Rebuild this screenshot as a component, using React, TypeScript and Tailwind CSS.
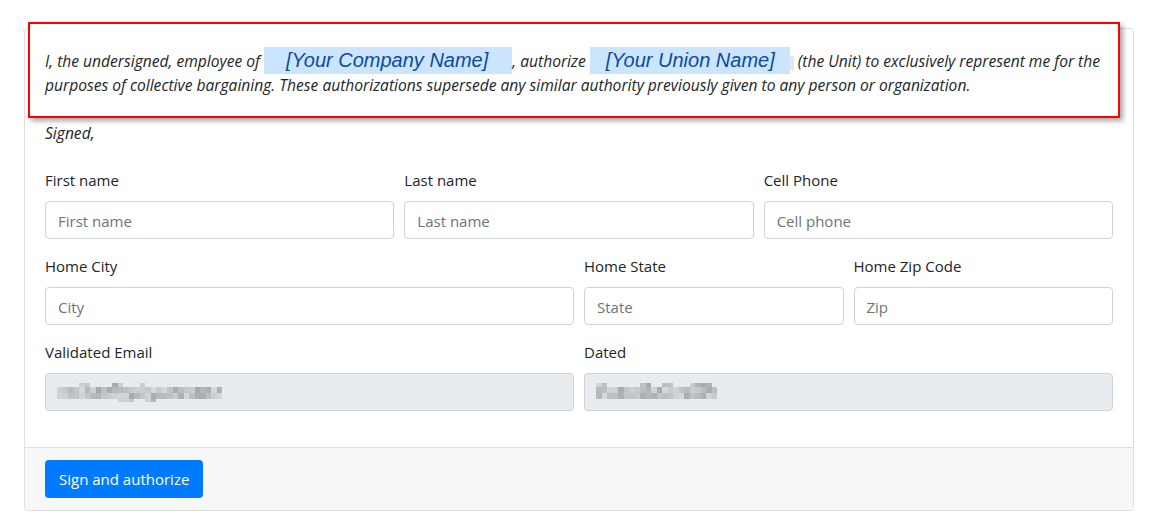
import React from "react";

const font = { fontFamily: '"Segoe UI", "Open Sans", sans-serif' };

function Field({ label, placeholder, className }: { label: string; placeholder: string; className: string }) {
  return (
    <div className={className}>
      <label className="block text-[15px] leading-[24px] text-[#212529] mb-[8px] -mt-[1px] pb-[1px]">{label}</label>
      <div className="h-[38px] rounded-[4px] border border-[#ced4da] bg-white px-[12px] pt-[2px] flex items-center text-[15px] text-[#6c757d]">
        {placeholder}
      </div>
    </div>
  );
}

// deterministic mosaic for a blurred (pixelated) value
function Mosaic({ cols, seed, asc, desc }: { cols: number; seed: number; asc: number[]; desc: number[] }) {
  const rnd = (i: number) => {
    const x = Math.sin(i * 12.9898 + seed * 78.233) * 43758.5453;
    return x - Math.floor(x);
  };
  const shade = (v: number) => {
    const g = Math.round(165 + v * 48);
    return `rgb(${g},${g + 3},${g + 7})`;
  };
  const rows = [
    { h: 4, on: (c: number) => asc.includes(c) },
    { h: 6, on: () => true },
    { h: 6, on: () => true },
    { h: 3, on: (c: number) => desc.includes(c) },
  ];
  return (
    <div className="flex flex-col">
      {rows.map((r, ri) => (
        <div key={ri} className="flex">
          {Array.from({ length: cols }).map((_, ci) => (
            <div
              key={ci}
              style={{
                width: 5.5,
                height: r.h,
                background: r.on(ci) ? shade(rnd(ci * 7 + ri * 31)) : "transparent",
              }}
            />
          ))}
        </div>
      ))}
    </div>
  );
}

function DisabledField({ label, children }: { label: string; children: React.ReactNode }) {
  return (
    <div className="col-span-2">
      <label className="block text-[15px] leading-[24px] text-[#212529] mb-[8px] -mt-[1px] pb-[1px]">{label}</label>
      <div className="h-[38px] rounded-[4px] border border-[#ced4da] bg-[#e9ecef] pl-[11px] flex items-center">
        {children}
      </div>
    </div>
  );
}

export default function App() {
  return (
    <div className="w-[1154px] h-[529px] bg-white" style={font}>
      <div className="pt-[28px] pl-[24px] pr-[20px]">
        <div className="border border-[#dfdfdf] rounded-[4px] bg-white">
          <div className="px-[20px] pt-[20px] pb-[36px]">
            <div className="relative -mt-[27px] -ml-[17px] -mr-[7px] border-2 border-[#ff0000] bg-white pl-[15px] pr-[10px] pt-[25px] pb-[19px] shadow-[3px_3px_5px_rgba(0,0,0,0.35)]">
              <p className="italic text-[15.6px] leading-[24px] text-[#212529]">
                I, the undersigned, employee of{" "}
                <span
                  className="not-italic bg-[#cce5ff] pl-[22px] pr-[24px] pt-[2px] pb-[3px] text-[20px] leading-none"
                  style={{ fontFamily: '"Liberation Sans", Arial, sans-serif' }}
                >
                  <span className="italic text-[#0b4aa3]">[Your Company Name]</span>
                </span>
                , authorize{" "}
                <span
                  className="not-italic bg-[#cce5ff] pl-[16px] pr-[15px] pt-[2px] pb-[3px] text-[20px] leading-none"
                  style={{ fontFamily: '"Liberation Sans", Arial, sans-serif' }}
                >
                  <span className="italic text-[#0b4aa3]">[Your Union Name]</span>
                </span>
                <span className="inline-block w-[4px] h-[14px] bg-[#e3e6ea] align-middle" />{" "}
                (the Unit) to exclusively represent me for the purposes of collective bargaining. These authorizations
                supersede any similar authority previously given to any person or organization.
              </p>
            </div>
            <p className="italic text-[15.6px] leading-[24px] text-[#212529] mt-[3px]">Signed,</p>

            <div className="grid grid-cols-3 gap-x-[10px] mt-[24px]">
              <Field label="First name" placeholder="First name" className="" />
              <Field label="Last name" placeholder="Last name" className="" />
              <Field label="Cell Phone" placeholder="Cell phone" className="" />
            </div>
            <div className="grid grid-cols-4 gap-x-[10px] mt-[16px]">
              <Field label="Home City" placeholder="City" className="col-span-2" />
              <Field label="Home State" placeholder="State" className="" />
              <Field label="Home Zip Code" placeholder="Zip" className="" />
            </div>
            <div className="grid grid-cols-4 gap-x-[10px] mt-[16px]">
              <DisabledField label="Validated Email">
                <Mosaic cols={30} seed={3} asc={[4, 5, 10, 11, 15]} desc={[11, 12, 13, 16, 17]} />
              </DisabledField>
              <DisabledField label="Dated">
                <Mosaic cols={22} seed={9} asc={[0, 1, 8, 9, 12, 13, 17, 18, 19, 20]} desc={[]} />
              </DisabledField>
            </div>
          </div>
          <div className="border-t border-[#dfdfdf] bg-[#f7f7f7] px-[20px] py-[12px] rounded-b-[4px]">
            <button className="h-[38px] px-[14px] rounded-[4px] bg-[#007bff] text-white text-[15px] leading-[24px]">
              Sign and authorize
            </button>
          </div>
        </div>
      </div>
    </div>
  );
}
